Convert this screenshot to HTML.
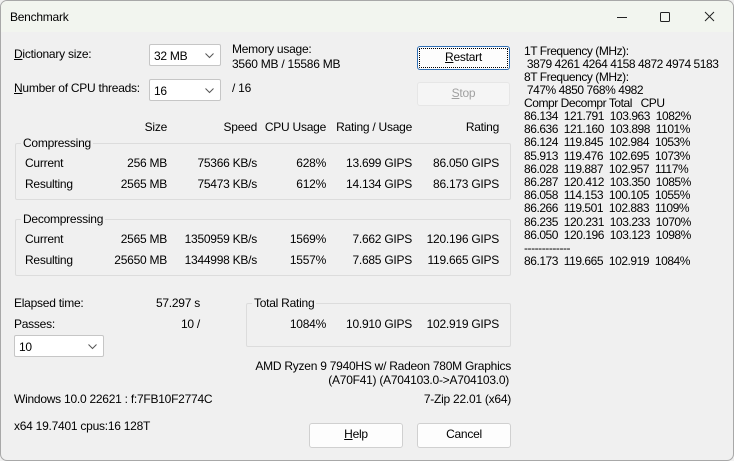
<!DOCTYPE html>
<html><head><meta charset="utf-8"><style>
*{margin:0;padding:0;box-sizing:border-box}
body{width:734px;height:461px;overflow:hidden;background:#f0f0f0;font-family:"Liberation Sans",sans-serif;font-size:12px;letter-spacing:-0.25px;color:#000;position:relative}
.win{position:absolute;left:0;top:0;width:734px;height:461px;border:1px solid #a8a8a8;border-radius:7px;background:#f0f0f0;overflow:hidden}
.tb{position:absolute;left:0;top:0;width:100%;height:31px;background:#f2f5ef}
.a{position:absolute;white-space:nowrap;line-height:14px}
.r{text-align:right}
.combo{position:absolute;background:#fff;border:1px solid #c6c6c6;border-radius:2px;height:22px}
.combo span{position:absolute;left:4px;top:4px}
.combo svg{position:absolute;right:6px;top:8px}
.grp{position:absolute;border:1px solid #dcdcdc;border-radius:2px}
.btn{position:absolute;background:#fdfdfd;border:1px solid #d0d0d0;border-radius:3px;text-align:center;line-height:21px}
u{text-decoration:underline}
.mono .a{line-height:13px;letter-spacing:-0.45px}
</style></head><body><div class="win">
<div class="tb"></div>
<div class="a" style="left:9px;top:9px">Benchmark</div>
<svg class="a" style="left:612px;top:9px" width="110" height="14"><path d="M4 7.5h10" stroke="#222" stroke-width="1"/><rect x="47.5" y="2.5" width="9" height="9" rx="1" fill="none" stroke="#222"/><path d="M92 2l9 9M101 2l-9 9" stroke="#222"/></svg>

<div class="a" style="left:13px;top:46px"><u>D</u>ictionary size:</div>
<div class="combo" style="left:148px;top:43px;width:72px"><span>32 MB</span><svg width="9" height="6"><path d="M.5 .5l4 4 4-4" fill="none" stroke="#555"/></svg></div>
<div class="a" style="left:231px;top:41px">Memory usage:</div>
<div class="a" style="left:231px;top:56px">3560 MB / 15586 MB</div>
<div class="a" style="left:13px;top:80px"><u>N</u>umber of CPU threads:</div>
<div class="combo" style="left:148px;top:78px;width:72px"><span>16</span><svg width="9" height="6"><path d="M.5 .5l4 4 4-4" fill="none" stroke="#555"/></svg></div>
<div class="a" style="left:231px;top:80px">/ 16</div>
<div class="btn" style="left:416px;top:45px;width:93px;height:24px;border:1px solid #2f6fb5;outline:1px dotted #000;outline-offset:-3px"><u>R</u>estart</div>
<div class="btn" style="left:416px;top:81px;width:93px;height:24px;background:#f5f5f5;border-color:#e6e6e6;color:#a0a0a0"><u>S</u>top</div>

<div class="a r" style="left:100px;top:119px;width:66px">Size</div>
<div class="a r" style="left:180px;top:119px;width:76px">Speed</div>
<div class="a r" style="left:260px;top:119px;width:65px">CPU Usage</div>
<div class="a r" style="left:330px;top:119px;width:81px">Rating / Usage</div>
<div class="a r" style="left:420px;top:119px;width:78px">Rating</div>

<div class="grp" style="left:14px;top:142px;width:496px;height:57px"></div>
<div class="a" style="left:20px;top:135px;background:#f0f0f0;padding:0 2px">Compressing</div>
<div class="a" style="left:24px;top:155px">Current</div>
<div class="a r" style="left:100px;top:155px;width:66px">256 MB</div>
<div class="a r" style="left:170px;top:155px;width:86px">75366 KB/s</div>
<div class="a r" style="left:260px;top:155px;width:65px">628%</div>
<div class="a r" style="left:330px;top:155px;width:81px">13.699 GIPS</div>
<div class="a r" style="left:420px;top:155px;width:78px">86.050 GIPS</div>
<div class="a" style="left:24px;top:176px">Resulting</div>
<div class="a r" style="left:100px;top:176px;width:66px">2565 MB</div>
<div class="a r" style="left:170px;top:176px;width:86px">75473 KB/s</div>
<div class="a r" style="left:260px;top:176px;width:65px">612%</div>
<div class="a r" style="left:330px;top:176px;width:81px">14.134 GIPS</div>
<div class="a r" style="left:420px;top:176px;width:78px">86.173 GIPS</div>

<div class="grp" style="left:14px;top:218px;width:496px;height:57px"></div>
<div class="a" style="left:20px;top:211px;background:#f0f0f0;padding:0 2px">Decompressing</div>
<div class="a" style="left:24px;top:231px">Current</div>
<div class="a r" style="left:100px;top:231px;width:66px">2565 MB</div>
<div class="a r" style="left:170px;top:231px;width:86px">1350959 KB/s</div>
<div class="a r" style="left:260px;top:231px;width:65px">1569%</div>
<div class="a r" style="left:330px;top:231px;width:81px">7.662 GIPS</div>
<div class="a r" style="left:420px;top:231px;width:78px">120.196 GIPS</div>
<div class="a" style="left:24px;top:252px">Resulting</div>
<div class="a r" style="left:100px;top:252px;width:66px">25650 MB</div>
<div class="a r" style="left:170px;top:252px;width:86px">1344998 KB/s</div>
<div class="a r" style="left:260px;top:252px;width:65px">1557%</div>
<div class="a r" style="left:330px;top:252px;width:81px">7.685 GIPS</div>
<div class="a r" style="left:420px;top:252px;width:78px">119.665 GIPS</div>

<div class="a" style="left:13px;top:295px">Elapsed time:</div>
<div class="a r" style="left:120px;top:295px;width:79px">57.297 s</div>
<div class="a" style="left:13px;top:316px">Passes:</div>
<div class="a r" style="left:120px;top:316px;width:79px">10 /</div>
<div class="combo" style="left:13px;top:334px;width:90px"><span>10</span><svg width="9" height="6"><path d="M.5 .5l4 4 4-4" fill="none" stroke="#555"/></svg></div>

<div class="grp" style="left:245px;top:302px;width:265px;height:44px"></div>
<div class="a" style="left:251px;top:295px;background:#f0f0f0;padding:0 2px">Total Rating</div>
<div class="a r" style="left:260px;top:316px;width:65px">1084%</div>
<div class="a r" style="left:330px;top:316px;width:81px">10.910 GIPS</div>
<div class="a r" style="left:420px;top:316px;width:78px">102.919 GIPS</div>

<div class="a r" style="left:250px;top:358px;width:260px">AMD Ryzen 9 7940HS w/ Radeon 780M Graphics</div>
<div class="a r" style="left:250px;top:372px;width:258px">(A70F41) (A704103.0-&gt;A704103.0)</div>
<div class="a" style="left:13px;top:391px">Windows 10.0 22621 : f:7FB10F2774C</div>
<div class="a r" style="left:350px;top:391px;width:160px">7-Zip 22.01 (x64)</div>
<div class="a" style="left:13px;top:418px">x64 19.7401 cpus:16 128T</div>
<div class="btn" style="left:308px;top:422px;width:94px;height:25px"><u>H</u>elp</div>
<div class="btn" style="left:416px;top:422px;width:94px;height:25px">Cancel</div>

<div class="mono">
<div class="a" style="left:523px;top:44px">1T Frequency (MHz):</div>
<div class="a" style="left:523px;top:57px">&nbsp;3879 4261 4264 4158 4872 4974 5183</div>
<div class="a" style="left:523px;top:70px">8T Frequency (MHz):</div>
<div class="a" style="left:523px;top:83px">&nbsp;747% 4850 768% 4982</div>
<div class="a" style="left:523px;top:96px">Compr Decompr Total &nbsp;&nbsp;CPU</div>
<div class="a" style="left:523px;top:109px;line-height:13.2px">86.134 &nbsp;121.791 &nbsp;103.963 &nbsp;1082%<br>86.636 &nbsp;121.160 &nbsp;103.898 &nbsp;1101%<br>86.124 &nbsp;119.845 &nbsp;102.984 &nbsp;1053%<br>85.913 &nbsp;119.476 &nbsp;102.695 &nbsp;1073%<br>86.028 &nbsp;119.887 &nbsp;102.957 &nbsp;1117%<br>86.287 &nbsp;120.412 &nbsp;103.350 &nbsp;1085%<br>86.058 &nbsp;114.153 &nbsp;100.105 &nbsp;1055%<br>86.266 &nbsp;119.501 &nbsp;102.883 &nbsp;1109%<br>86.235 &nbsp;120.231 &nbsp;103.233 &nbsp;1070%<br>86.050 &nbsp;120.196 &nbsp;103.123 &nbsp;1098%<br>-------------<br>86.173 &nbsp;119.665 &nbsp;102.919 &nbsp;1084%</div>
</div>
</div></body></html>
